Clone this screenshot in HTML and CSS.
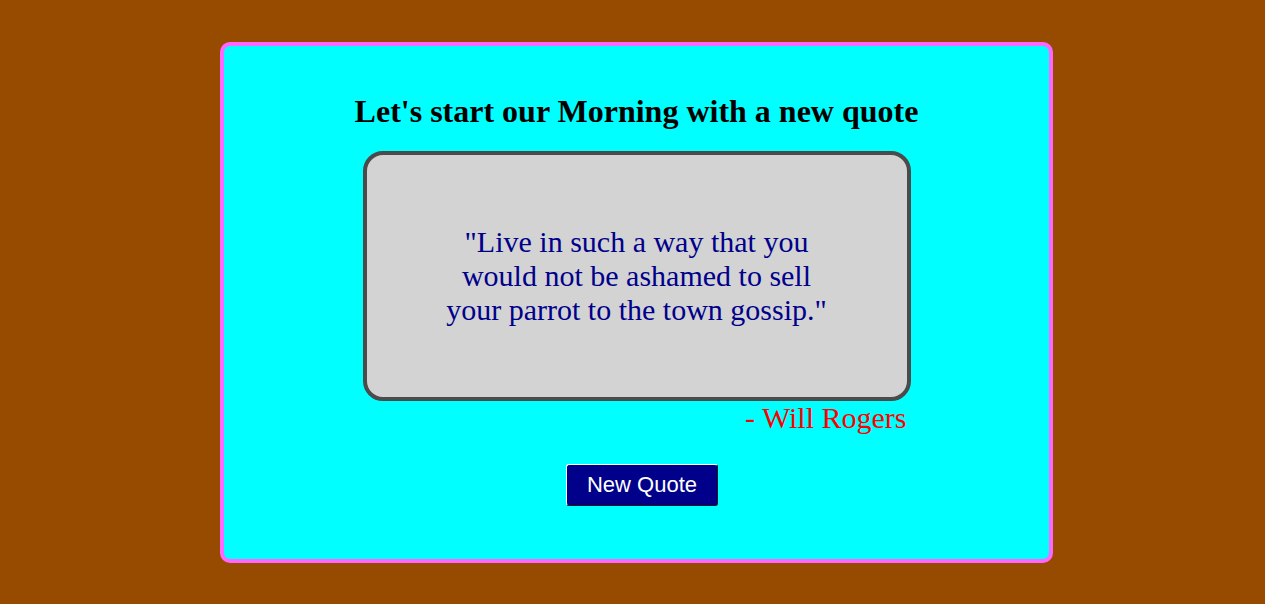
FILE: index.html
```html
<!DOCTYPE html>
<html>
<head>
<meta charset="utf-8">
<link rel="stylesheet" href="styles.css">
</head>
<body>
<div class="card">
  <h1 class="title">Let's start our Morning with a new quote</h1>
  <div class="quote-wrap">
    <div class="quote-box">
      <p class="quote-text">"Live in such a way that you would not be ashamed to sell your parrot to the town gossip."</p>
    </div>
    <div class="author">- Will Rogers</div>
  </div>
  <button class="new-btn">New Quote</button>
</div>
</body>
</html>
```
FILE: styles.css
```css
html, body {
  background: #964b00;
}
body {
  margin: 0 0 0 8px;
  padding-top: 42px;
  font-family: "Liberation Serif", serif;
}
.card {
  box-sizing: border-box;
  width: 833px;
  height: 521px;
  margin: 0 auto;
  background: #00ffff;
  border: 4px solid #ff66ff;
  border-radius: 10px;
  display: flex;
  flex-direction: column;
  align-items: center;
  padding-top: 48px;
}
.title {
  margin: 0;
  font-size: 32px;
  line-height: 34px;
  font-weight: bold;
  color: #000;
}
.quote-wrap {
  margin-top: 23px;
  width: 548px;
  display: flex;
  flex-direction: column;
}
.quote-box {
  box-sizing: border-box;
  width: 548px;
  height: 250px;
  background: #d3d3d3;
  border: 4px solid #4b4b4b;
  border-radius: 20px;
  display: flex;
  align-items: center;
  justify-content: center;
}
.quote-text {
  margin: 0;
  width: 400px;
  text-align: center;
  font-size: 30px;
  line-height: 34px;
  color: #00008b;
}
.author {
  align-self: flex-end;
  margin-right: 4px;
  font-size: 30px;
  line-height: 34px;
  color: #ff0000;
}
.new-btn {
  margin-top: 29px;
  margin-left: 11px;
  width: 152px;
  height: 42px;
  background: #00008b;
  color: #fff;
  border-style: solid;
  border-width: 1px;
  border-color: #ffffff #1a1a1a #1a1a1a #ffffff;
  border-radius: 3px;
  font-family: "Liberation Sans", sans-serif;
  font-size: 22px;
  padding: 0;
}
```
